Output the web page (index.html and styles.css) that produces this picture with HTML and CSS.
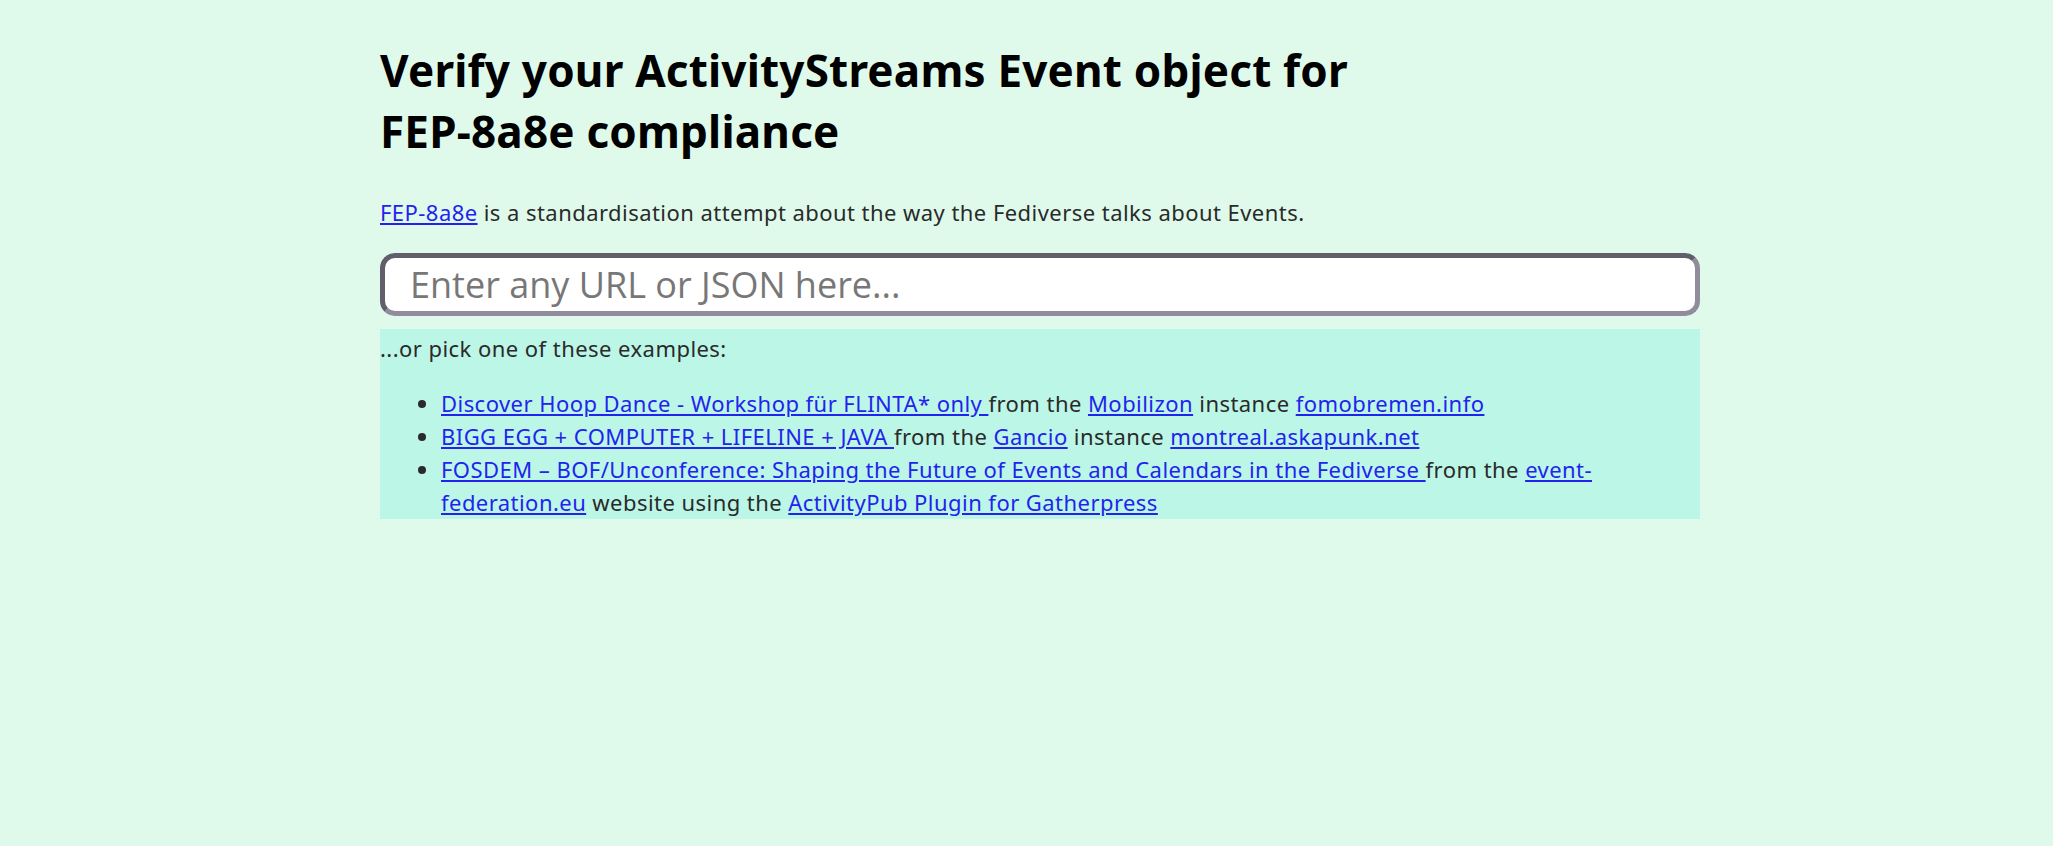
FILE: index.html
```html
<!DOCTYPE html>
<html lang="en">
<head>
    <meta charset="UTF-8">
    <meta name="viewport" content="width=device-width, initial-scale=1.0">
    <title>FEP-8a8e Event Verifier</title>
    <link rel="stylesheet" href="styles.css">
</head>
<body>
    <main class="container">
        <h1>Verify your ActivityStreams Event object for FEP-8a8e compliance</h1>

        <p class="intro">
            <a href="#">FEP-8a8e</a> is a standardisation attempt about the way the Fediverse talks about Events.
        </p>

        <form class="lookup" onsubmit="return false">
            <input type="text" class="lookup-input" placeholder="Enter any URL or JSON here...">
        </form>

        <!-- Sample objects to try -->
        <section class="examples">
            <p>...or pick one of these examples:</p>
            <ul>
                <li><a href="#">Discover Hoop Dance - Workshop für FLINTA* only </a> from the <a href="#">Mobilizon</a> instance <a href="#">fomobremen.info</a></li>
                <li><a href="#">BIGG EGG + COMPUTER + LIFELINE + JAVA </a> from the <a href="#">Gancio</a> instance <a href="#">montreal.askapunk.net</a></li>
                <li><a href="#">FOSDEM – BOF/Unconference: Shaping the Future of Events and Calendars in the Fediverse </a> from the <a href="#">event-federation.eu</a> website using the <a href="#">ActivityPub Plugin for Gatherpress</a></li>
            </ul>
        </section>
    </main>
</body>
</html>
```

FILE: styles.css
```css
:root {
    --bg: #dffaea;
    --panel: #bcf6e7;
    --link: #2323ee;
    --text: #2a2a2a;
}

body {
    margin: 0;
    background: var(--bg);
    color: var(--text);
    font-family: 'Noto Sans', Roboto, sans-serif;
    font-size: 22px;
    line-height: 1.5;
    letter-spacing: 0.45px;
}

a {
    color: var(--link);
}

.container {
    width: 1320px;
    margin-left: 380px;
    padding-top: 40px;
}

h1 {
    max-width: 1010px;
    margin: 0 0 34px;
    font-size: 44px;
    line-height: 61px;
    font-weight: 700;
    letter-spacing: 0.2px;
    color: #000;
}

.intro {
    margin: 0 0 24px;
}

.lookup {
    margin: 0 0 13px;
}

.lookup-input {
    box-sizing: border-box;
    display: block;
    width: 100%;
    height: 63px;
    padding: 0 25px;
    border: 5px solid;
    border-color: #5f5e6a #8f8d9c #8f8d9c #5f5e6a;
    border-radius: 15px;
    background: #fff;
    font-family: 'Open Sans', sans-serif;
    font-size: 36px;
    letter-spacing: 0;
    color: #222;
}

.lookup-input::placeholder {
    color: #777;
}

.examples {
    background: var(--panel);
    padding-top: 3px;
}

.examples p {
    margin: 0;
}

.examples ul {
    margin: 22px 0 0;
    padding-left: 61px;
}
```
